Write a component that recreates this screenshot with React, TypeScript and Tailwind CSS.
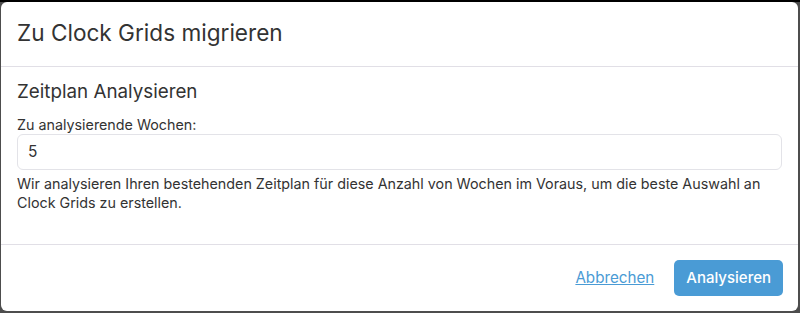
export default function App() {
  return (
    <div className="h-[313px] w-[800px] overflow-hidden border-t-2 border-t-black bg-[#4d4d4d] pb-[2px] pl-[1px] pr-[2px] [font-family:Inter,'Liberation_Sans',sans-serif]">
      <div className="flex h-full flex-col rounded-[6px] bg-white text-[#333]">
        <div className="border-b border-[#e1dfe6] px-[16px] pt-[17px] pb-[19px]">
          <h1 className="text-[22.6px] leading-[28px]">Zu Clock Grids migrieren</h1>
        </div>
        <div className="border-b border-[#e1dfe6] px-[16px] pt-[13px] pb-[32px]">
          <h2 className="text-[18.8px] leading-[24px]">Zeitplan Analysieren</h2>
          <label className="mt-[11px] block text-[14.3px] leading-[19px]">Zu analysierende Wochen:</label>
          <div className="flex h-[36px] items-center rounded-[6px] border border-[#e3e3e8] px-[10px] text-[15.5px]">5</div>
          <p className="mt-[4px] text-[14.3px] leading-[19px]">
            Wir analysieren Ihren bestehenden Zeitplan für diese Anzahl von Wochen im Voraus, um die beste Auswahl an Clock Grids zu erstellen.
          </p>
        </div>
        <div className="flex flex-1 items-center justify-end gap-[20px] pl-[16px] pr-[15px]">
          <button type="button" className="text-[15.2px] text-[#4a9bd5] underline">
            Abbrechen
          </button>
          <button
            type="button"
            className="h-[36px] rounded-[5px] bg-[#4a9bd5] px-[12px] text-[15px] font-medium text-white"
          >
            Analysieren
          </button>
        </div>
      </div>
    </div>
  )
}
